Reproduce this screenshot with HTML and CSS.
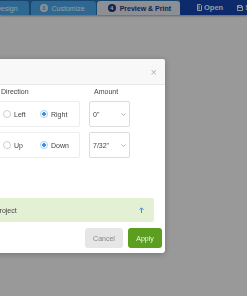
FILE: index.html
```html
<!DOCTYPE html>
<html lang="en">
<head>
    <meta charset="UTF-8">
    <title>Shift Project</title>
    <link rel="stylesheet" href="styles.css">
</head>
<body>
    <div id="topbar">
        <div class="tab"><span class="step">2</span>Design</div>
        <div class="tab"><span class="step">3</span>Customize</div>
        <div class="tab tab-active"><span class="step">4</span>Preview &amp; Print</div>
        <div class="actions">
            <span class="action">
                <svg width="5" height="7" viewBox="0 0 5 7"><path d="M0.5 0.5h3l1 1v5h-4z M2 1.5v4" fill="none" stroke="#fff" stroke-width="1"/></svg>
                Open
            </span>
            <span class="action">
                <svg width="6" height="6" viewBox="0 0 6 6"><path d="M0.5 0.5h4l1 1v4h-5z M1.5 0.5v2h3v-2" fill="none" stroke="#fff" stroke-width="1"/></svg>
                Save
            </span>
        </div>
    </div>
    <div id="overlay"></div>
    <div id="shiftModal">
        <div class="modal-head">
            <button class="close">&times;</button>
        </div>
        <div class="modal-body">
            <div class="shift-grid">
                <div class="col-label">Direction</div>
                <div class="col-label">Amount</div>
                <div class="radio-box">
                    <label class="radio"><span class="dot"></span>Left</label>
                    <label class="radio checked"><span class="dot"></span>Right</label>
                </div>
                <div class="select">0"<svg width="5" height="3" viewBox="0 0 5 3"><path d="M0.5 0.5l2 2 2-2" fill="none" stroke="#999" stroke-width="0.8"/></svg></div>
                <div class="radio-box">
                    <label class="radio"><span class="dot"></span>Up</label>
                    <label class="radio checked"><span class="dot"></span>Down</label>
                </div>
                <div class="select">7/32"<svg width="5" height="3" viewBox="0 0 5 3"><path d="M0.5 0.5l2 2 2-2" fill="none" stroke="#999" stroke-width="0.8"/></svg></div>
            </div>
            <div class="notice">
                <span>Apply to entire project</span>
                <svg width="5" height="6" viewBox="0 0 5 6"><path d="M2.5 6V1 M0.5 2.8l2-2 2 2" fill="none" stroke="#3b8fd8" stroke-width="1"/></svg>
            </div>
        </div>
        <div class="modal-foot">
            <button class="btn btn-cancel">Cancel</button>
            <button class="btn btn-apply">Apply</button>
        </div>
    </div>
</body>
</html>
```
FILE: styles.css
```css
body {
    margin: 0;
    overflow: hidden;
    background: #fff;
    font-family: "Liberation Sans", Arial, sans-serif;
    height: 296px;
}

#topbar {
    display: flex;
    justify-content: flex-end;
    overflow: hidden;
    height: 15px;
    background: #2a75b7;
    box-shadow: 0 1px 2px rgba(0,0,0,0.35);
}
.tab {
    flex-shrink: 0;
    display: flex;
    align-items: center;
    gap: 4px;
    margin-top: 1px;
    margin-right: 2px;
    padding: 0 11px 0 9px;
    height: 14px;
    border-radius: 3px 3px 0 0;
    background: #4dadf3;
    color: #fff;
    font-size: 7px;
}
.tab .step {
    width: 8px;
    height: 8px;
    border-radius: 50%;
    background: #e6eef6;
    color: #4dadf3;
    font-size: 6px;
    font-weight: bold;
    line-height: 8px;
    text-align: center;
}
.tab-active {
    margin-right: 0;
    margin-left: -1px;
    padding: 0 9px 0 11px;
    background: #e9eef7;
    color: #213a85;
    font-weight: bold;
}
.tab-active .step {
    background: #213a85;
    color: #fff;
}
.actions {
    flex-shrink: 0;
    display: flex;
    align-items: center;
    gap: 14px;
    width: 67px;
    padding-left: 17px;
    box-sizing: border-box;
    background: #1646b4;
    color: #fff;
    font-size: 7.5px;
    font-weight: bold;
}
.action {
    display: flex;
    align-items: center;
    gap: 2px;
    white-space: nowrap;
}

#overlay {
    position: fixed;
    top: 0;
    left: 0;
    width: 100%;
    height: 100%;
    background: rgba(0,0,0,0.4);
}

#shiftModal {
    position: fixed;
    top: 59px;
    left: -70px;
    width: 235px;
    height: 194px;
    background: #fff;
    border-radius: 3px;
    box-shadow: 0 1px 6px rgba(0,0,0,0.25);
    display: flex;
    flex-direction: column;
    font-size: 7px;
    color: #333;
}
.modal-head {
    height: 25px;
    border-bottom: 1px solid #e8e8e8;
    background: #f8f8f8;
    border-radius: 3px 3px 0 0;
    display: flex;
    justify-content: flex-end;
    align-items: center;
    padding-right: 8px;
}
.close {
    border: none;
    background: none;
    padding: 0;
    color: #b5b5b5;
    font-size: 11px;
    line-height: 10px;
    font-family: "Liberation Sans", Arial, sans-serif;
}
.modal-body {
    padding: 2px 11px 0 12px;
}
.shift-grid {
    display: grid;
    grid-template-columns: 84px 41px;
    grid-template-rows: 9px 26px 26px;
    column-gap: 9px;
    row-gap: 5px;
    margin-left: 54px;
}
.col-label {
    padding-left: 5px;
    line-height: 9px;
    color: #444;
}
.radio-box {
    display: grid;
    grid-template-columns: 37px auto;
    align-items: center;
    padding-left: 6px;
    border: 1px solid #ededed;
    border-radius: 2px;
}
.radio {
    display: flex;
    align-items: center;
    gap: 3px;
    color: #444;
}
.dot {
    width: 6px;
    height: 6px;
    border: 1px solid #cfcfcf;
    border-radius: 50%;
    background: #fff;
}
.radio.checked .dot {
    border-color: #a9d1f1;
    background: radial-gradient(circle, #3d93dd 0 1.6px, #fff 2px);
}
.select {
    display: flex;
    align-items: center;
    justify-content: space-between;
    padding: 0 3px 0 3px;
    border: 1px solid #dcdcdc;
    border-radius: 2px;
    color: #444;
}
.notice {
    display: flex;
    align-items: center;
    justify-content: space-between;
    margin-top: 40px;
    height: 24px;
    padding: 0 10px 0 7px;
    background: #e4f0d4;
    border-radius: 2px;
    color: #444;
    white-space: nowrap;
}
.modal-foot {
    display: flex;
    justify-content: flex-end;
    gap: 5px;
    padding: 6px 3px 5px 0;
}
.btn {
    height: 20px;
    border: none;
    border-radius: 3px;
    font-family: "Liberation Sans", Arial, sans-serif;
    font-size: 7px;
    padding: 0;
}
.btn-cancel {
    width: 38px;
    background: #e6e6e6;
    color: #888;
}
.btn-apply {
    width: 34px;
    background: #5c9e1f;
    color: #f2f8ea;
}
```
